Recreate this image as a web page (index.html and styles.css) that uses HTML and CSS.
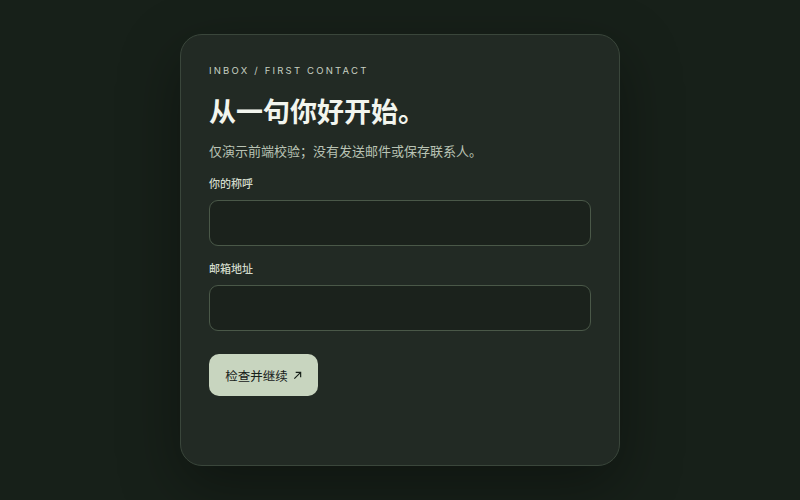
FILE: index.html
```html
<!DOCTYPE html>
<html lang="zh">
<head>
<meta charset="utf-8">
<link rel="stylesheet" href="styles.css">
</head>
<body>
<main class="stage">
  <form class="card">
    <p class="eyebrow">INBOX / FIRST CONTACT</p>
    <h1 class="title">从一句你好开始。</h1>
    <p class="lead">仅演示前端校验；没有发送邮件或保存联系人。</p>
    <label class="field">
      <span class="label">你的称呼</span>
      <input class="input" type="text">
    </label>
    <label class="field">
      <span class="label">邮箱地址</span>
      <input class="input" type="email">
    </label>
    <button class="btn" type="button">检查并继续<svg class="arrow" viewBox="0 0 10 10" width="9" height="9" aria-hidden="true"><path d="M1.5 8.5 L8.5 1.5 M3 1.5 H8.5 V7" fill="none" stroke="currentColor" stroke-width="1.3"/></svg></button>
  </form>
</main>
</body>
</html>
```

FILE: styles.css
```css
* { box-sizing: border-box; }
html, body { margin: 0; height: 100%; }
body {
  background: #172019;
  font-family: Inter, "Noto Sans CJK SC", "Noto Sans", sans-serif;
  color: #eef2ea;
}
.stage {
  height: 100%;
  display: flex;
  align-items: center;
  justify-content: center;
}
.card {
  width: 440px;
  height: 432px;
  background: #222a24;
  border: 1px solid #3a463b;
  border-radius: 22px;
  padding: 29px 28px 28px;
  display: flex;
  flex-direction: column;
  box-shadow: 0 20px 60px rgba(0,0,0,0.35);
}
.eyebrow {
  margin: 0;
  font-size: 9.5px;
  letter-spacing: 2.2px;
  color: #c7d0c2;
  line-height: 13px;
}
.title {
  margin: 18px 0 0;
  font-size: 27px;
  font-weight: 700;
  line-height: 36px;
  color: #f2f5ee;
}
.lead {
  margin: 10px 0 0;
  font-size: 13px;
  line-height: 20px;
  color: #b9c3b4;
}
.field {
  display: flex;
  flex-direction: column;
  margin-top: 15px;
}
.field + .field { margin-top: 15px; }
.label {
  font-size: 11px;
  line-height: 16px;
  color: #d2dacb;
  font-weight: 500;
}
.input {
  margin-top: 8px;
  height: 46px;
  background: #1b221c;
  border: 1px solid #4a5848;
  border-radius: 9px;
  color: #eef2ea;
  font: inherit;
}
.btn {
  align-self: flex-start;
  margin-top: 23px;
  height: 42px;
  width: 109px;
  border: none;
  border-radius: 10px;
  background: #c8d5bf;
  color: #172019;
  font-family: Inter, "Noto Sans CJK SC", sans-serif;
  font-size: 12.5px;
  padding: 0;
  display: flex;
  align-items: center;
  justify-content: center;
  gap: 5px;
}
.arrow {
  flex: none;
}
```
